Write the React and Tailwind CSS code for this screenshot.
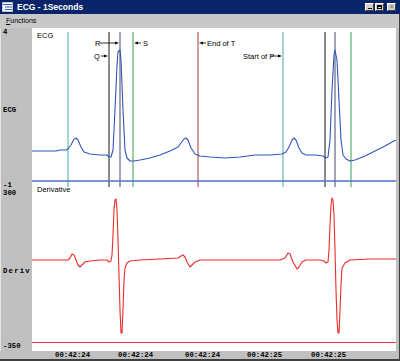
import React from 'react';

const ecgPoints = [
  '32,151 56,151 60,150 66,150 68,149 71,145 74,139 76,138 78,140 81,147 84,152 90,154 100,155 107,155',
  '109,157 111,157 113,150 115,110 117,65 118,52 120,50 121,60 123,110 125,150 127,158 130,161 134,161',
  '140,160 150,158 160,155 170,151 178,147 181,143 184,139 186,138 188,140 191,148 195,154 200,156',
  '210,157 225,158 240,157 255,155 270,155 282,154 286,152 289,147 292,140 294,138 296,140 299,148',
  '302,153 306,155 315,155 323,156 326,158 328,157 330,140 332,90 334,55 335,50 337,60 339,100 341,140',
  '343,155 346,159 350,161 355,160 365,156 375,151 385,146 392,142 396,140'
].join(' ');

const derivPoints = [
  '32,260 50,260 68,260 70,258 72,254 74,255 76,260 78,265 80,267 82,265 85,262 90,261 100,260 107,260',
  '109,262 111,261 112,255 113,235 114,210 115,200 116,199 117,210 118,240 119,275 120,310 121,333',
  '122,333 123,310 124,280 125,268 127,263 130,261 140,260 160,259 178,258 181,256 183,255 185,257',
  '187,262 190,267 192,265 195,262 200,260 220,260 240,260 260,260 280,260 285,258 288,253 290,254',
  '293,262 297,269 299,267 302,262 306,260 320,260 324,261 326,263 328,262 329,250 330,225 331,205',
  '332,198 333,200 334,215 335,250 336,290 337,320 338,333 339,333 340,310 341,285 342,268 345,263',
  '350,260 370,259 396,259'
].join(' ');

const markers = [
  { x: 68, color: '#48a8a0', w: 1 },
  { x: 109, color: '#707070', w: 1.6 },
  { x: 120, color: '#404868', w: 1 },
  { x: 133, color: '#30a050', w: 1 },
  { x: 198, color: '#a03838', w: 1 },
  { x: 283, color: '#48a8a0', w: 1 },
  { x: 325, color: '#707070', w: 1.6 },
  { x: 335, color: '#404868', w: 1 },
  { x: 351, color: '#30a050', w: 1 }
];

const times = [
  { label: '00:42:24', w: 'w-[63px]' },
  { label: '00:42:24', w: 'w-[67px]' },
  { label: '00:42:24', w: 'w-[62px]' },
  { label: '00:42:25', w: 'w-[64px]' },
  { label: '00:42:25', w: 'w-[50px]' }
];

function TitleButton({ children }) {
  return (
    <div className="w-[9px] h-[8px] bg-[#d4d0c8] border-t border-l border-white border-r border-b border-r-[#404040] border-b-[#404040] flex items-center justify-center">
      {children}
    </div>
  );
}

function Chart() {
  const label = { fontFamily: '"Liberation Sans", Arial, sans-serif', fontSize: 7.5, fill: '#000' };
  return (
    <svg width="364" height="323" viewBox="32 28 364 323" className="block bg-white">
      {markers.map((m) => (
        <line key={m.x} x1={m.x} y1="32" x2={m.x} y2="187" stroke={m.color} strokeWidth={m.w} />
      ))}
      <line x1="32" y1="181" x2="396" y2="181" stroke="#5070c8" strokeWidth="1.4" />
      <line x1="32" y1="342.5" x2="396" y2="342.5" stroke="#f03434" strokeWidth="1" />
      <polyline points={ecgPoints} fill="none" stroke="#3355bb" strokeWidth="1.1" strokeLinejoin="round" />
      <polyline points={derivPoints} fill="none" stroke="#ee2a2a" strokeWidth="1.1" strokeLinejoin="round" />

      <text x="37" y="38" style={label}>ECG</text>
      <text x="37" y="192" style={label}>Derivative</text>

      <text x="95" y="46" style={label}>R</text>
      <line x1="100" y1="43" x2="116" y2="43" stroke="#000" strokeWidth="0.8" />
      <polygon points="119,43 115,41.4 115,44.6" fill="#000" />

      <text x="94" y="59" style={label}>Q</text>
      <line x1="101" y1="56" x2="105" y2="56" stroke="#000" strokeWidth="0.8" />
      <polygon points="108,56 104,54.4 104,57.6" fill="#000" />

      <polygon points="134,43 138,41.4 138,44.6" fill="#000" />
      <line x1="137" y1="43" x2="141" y2="43" stroke="#000" strokeWidth="0.8" />
      <text x="143" y="46" style={label}>S</text>

      <polygon points="199,43 203,41.4 203,44.6" fill="#000" />
      <line x1="202" y1="43" x2="206" y2="43" stroke="#000" strokeWidth="0.8" />
      <text x="207" y="46" style={label}>End of T</text>

      <text x="243" y="59" style={label}>Start of P</text>
      <line x1="271" y1="56" x2="279" y2="56" stroke="#000" strokeWidth="0.8" />
      <polygon points="282,56 278,54.4 278,57.6" fill="#000" />
    </svg>
  );
}

export default function App() {
  const mono = { fontFamily: '"Liberation Mono", "Courier New", monospace' };
  return (
    <div className="w-[400px] h-[361px] flex flex-col bg-[#c0c0c0] overflow-hidden" style={{ fontFamily: '"Liberation Sans", Arial, sans-serif' }}>
      <div className="h-[14px] bg-[#0a246a] flex items-center">
        <svg width="11" height="10" viewBox="0 0 11 10" className="ml-[2px]">
          <rect x="0" y="0" width="11" height="10" fill="#ffffff" />
          <rect x="0" y="0" width="11" height="10" fill="none" stroke="#8090b0" strokeWidth="1" />
          <line x1="1" y1="2.5" x2="10" y2="2.5" stroke="#3a5ab8" />
          <line x1="3" y1="5" x2="10" y2="5" stroke="#3a5ab8" />
          <line x1="3" y1="7.5" x2="10" y2="7.5" stroke="#3a5ab8" />
        </svg>
        <span className="ml-[4px] text-white font-bold text-[8.5px] leading-[14px]">ECG - 1Seconds</span>
        <div className="ml-auto mr-[4px] flex items-center">
          <TitleButton>
            <div className="w-[4px] h-[1.5px] bg-black mt-[3px]" />
          </TitleButton>
          <div className="ml-[1px]">
            <TitleButton>
              <div className="w-[5px] h-[4px] border border-black border-t-2" />
            </TitleButton>
          </div>
          <div className="ml-[3px]">
            <TitleButton>
              <span className="text-[7px] leading-[6px] text-[#808080] font-bold">×</span>
            </TitleButton>
          </div>
        </div>
      </div>

      <div className="h-[14px] bg-[#c8c8c8] flex items-center pl-[6px] border-r border-[#404040]">
        <span className="text-[7px] leading-[10px] text-black"><span className="underline">F</span>unctions</span>
      </div>

      <div className="h-[323px] flex">
        <div className="w-[32px] bg-[#c0c0c0] border-l border-[#e4e4e4] flex flex-col pl-[2px] font-bold text-[7.3px] leading-[8px] text-black" style={mono}>
          <span>4</span>
          <span className="mt-[70px]">ECG</span>
          <span className="mt-[67px]">-1</span>
          <span>300</span>
          <span className="mt-[70px] tracking-[1.2px]">Deriv</span>
          <span className="mt-[67px]">-350</span>
        </div>
        <Chart />
        <div className="w-[4px] bg-[#c0c0c0] border-r border-[#404040]" />
      </div>

      <div className="h-[8px] flex items-center pl-[55px] font-bold text-[7.3px] leading-[8px] text-black border-r border-[#404040]" style={mono}>
        {times.map((t, i) => (
          <span key={i} className={`${t.w} shrink-0`}>{t.label}</span>
        ))}
      </div>
      <div className="h-[2px] bg-[#404040]" />
    </div>
  );
}
